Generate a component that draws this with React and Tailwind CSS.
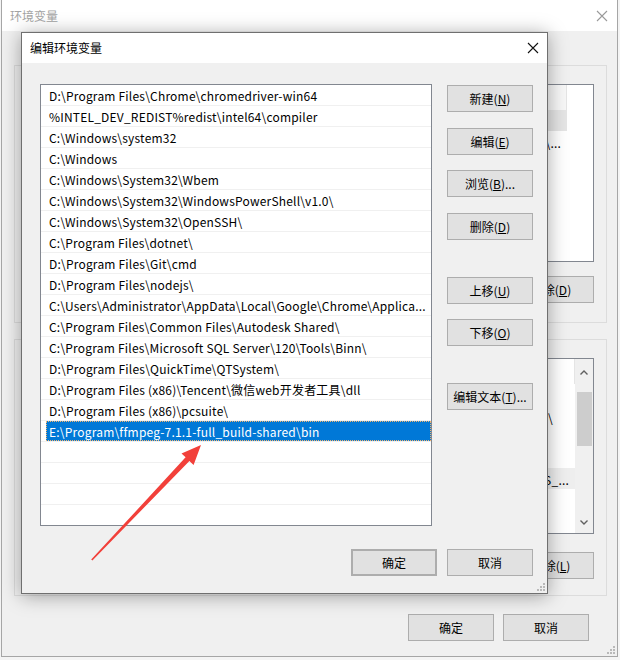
import React from 'react';

const paths = [
  'D:\\Program Files\\Chrome\\chromedriver-win64',
  '%INTEL_DEV_REDIST%redist\\intel64\\compiler',
  'C:\\Windows\\system32',
  'C:\\Windows',
  'C:\\Windows\\System32\\Wbem',
  'C:\\Windows\\System32\\WindowsPowerShell\\v1.0\\',
  'C:\\Windows\\System32\\OpenSSH\\',
  'C:\\Program Files\\dotnet\\',
  'D:\\Program Files\\Git\\cmd',
  'D:\\Program Files\\nodejs\\',
  'C:\\Users\\Administrator\\AppData\\Local\\Google\\Chrome\\Applica...',
  'C:\\Program Files\\Common Files\\Autodesk Shared\\',
  'C:\\Program Files\\Microsoft SQL Server\\120\\Tools\\Binn\\',
  'D:\\Program Files\\QuickTime\\QTSystem\\',
  'D:\\Program Files (x86)\\Tencent\\微信web开发者工具\\dll',
  'D:\\Program Files (x86)\\pcsuite\\',
  'E:\\Program\\ffmpeg-7.1.1-full_build-shared\\bin',
  '', '', '', '', '',
];

function CloseIcon({ color }) {
  return (
    <svg width="12" height="12" viewBox="0 0 12 12">
      <path d="M1 1L11 11M11 1L1 11" stroke={color} strokeWidth="1.1" fill="none" />
    </svg>
  );
}

function Grip() {
  return (
    <svg width="8" height="8" viewBox="0 0 8 8">
      <rect x="6" y="0" width="2" height="2" fill="#b9b9b9" />
      <rect x="3" y="3" width="2" height="2" fill="#b9b9b9" />
      <rect x="6" y="3" width="2" height="2" fill="#b9b9b9" />
      <rect x="0" y="6" width="2" height="2" fill="#b9b9b9" />
      <rect x="3" y="6" width="2" height="2" fill="#b9b9b9" />
      <rect x="6" y="6" width="2" height="2" fill="#b9b9b9" />
    </svg>
  );
}

function Btn({ children, className = '' }) {
  return (
    <div className={'w-[86px] h-[27px] shrink-0 bg-[#e1e1e1] border border-[#adadad] flex items-center justify-center text-[12px] text-black ' + className}>
      <span>{children}</span>
    </div>
  );
}

function Row({ text, selected }) {
  return (
    <div className="h-[21px] shrink-0 border-b border-[#f0f0f0] pl-[5px] flex">
      {selected ? (
        <div className="flex-1 bg-[#0078d7] text-white border border-dotted border-[#f3b46f] flex items-center pl-[2px] pt-[2px]">
          {text}
        </div>
      ) : (
        <div className="flex-1 flex items-center pl-[3px] pt-[2px] text-black">{text}</div>
      )}
    </div>
  );
}

function OuterWindow() {
  return (
    <div className="absolute left-[1px] top-0 w-[617px] h-[657px] border-x border-b border-[#a6a6a6] bg-[#f0f0f0] flex flex-col">
      <div className="h-[31px] shrink-0 bg-white flex items-center justify-between pl-[8px] pr-[9px]">
        <span className="text-[12px] text-[#a3a3a3]">环境变量</span>
        <CloseIcon color="#9a9a9a" />
      </div>

      <div className="mt-[34px] ml-[12px] mr-[10px] h-[258px] shrink-0 border border-[#dcdcdc] flex flex-col items-end pt-[18px] pr-[12px]">
        <div className="w-[560px] h-[178px] bg-white border border-[#828790] flex flex-col text-[12px] tracking-[0.2px] overflow-hidden">
          <div className="h-[25px] shrink-0 flex">
            <div className="w-[532px] border-r border-[#e5e5e5] bg-[#f7f7f7]" />
          </div>
          <div className="h-[21px] shrink-0 w-[532px] bg-[#e5e5e5]" />
          <div className="h-[21px] shrink-0 w-[532px] flex items-center justify-end pr-[6px] pt-[2px] text-black">
            C:\Users\Administrator\AppData\Local\Microsoft\WindowsApps\...
          </div>
        </div>
        <div className="mt-[14px]">
          <Btn>删除(<u>D</u>)</Btn>
        </div>
      </div>

      <div className="mt-[16px] ml-[12px] mr-[10px] h-[257px] shrink-0 border border-[#dcdcdc] flex flex-col items-end pt-[18px] pr-[12px]">
        <div className="w-[560px] h-[176px] bg-white border border-[#828790] flex text-[12px] tracking-[0.2px] overflow-hidden">
          <div className="flex-1 flex flex-col">
            <div className="h-[25px] shrink-0 border-r border-[#e5e5e5]" />
            <div className="h-[21px] shrink-0" />
            <div className="h-[21px] shrink-0 flex items-center justify-end pr-[22px] pt-[5px] text-black">C:\Windows\system32\</div>
            <div className="h-[21px] shrink-0" />
            <div className="h-[21px] shrink-0" />
            <div className="h-[21px] shrink-0 bg-[#eeeeee] flex items-center justify-end pr-[6px] pt-[2px] text-black">
              NUMBER_OF_PROCESSORS_...
            </div>
          </div>
          <div className="w-[18px] shrink-0 bg-[#f0f0f0] flex flex-col items-center">
            <svg width="10" height="17" viewBox="0 0 10 17" className="mt-[5px]">
              <path d="M1.5 10.5L5 7L8.5 10.5" stroke="#606060" strokeWidth="1.4" fill="none" />
            </svg>
            <div className="mt-[11px] w-[15px] h-[54px] bg-[#cdcdcd]" />
            <div className="flex-1" />
            <svg width="10" height="17" viewBox="0 0 10 17" className="mb-[2px]">
              <path d="M1.5 6.5L5 10L8.5 6.5" stroke="#606060" strokeWidth="1.4" fill="none" />
            </svg>
          </div>
        </div>
        <div className="mt-[18px]">
          <Btn>删除(<u>L</u>)</Btn>
        </div>
      </div>

      <div className="mt-[18px] flex justify-end gap-[9px] pr-[28px]">
        <Btn>确定</Btn>
        <Btn>取消</Btn>
      </div>
      <div className="flex-1 flex items-end justify-end pr-[2px] pb-[2px]">
        <Grip />
      </div>
    </div>
  );
}

function EditDialog() {
  return (
    <div className="absolute left-[21px] top-[32px] w-[527px] h-[562px] border border-[#6f6f6f] bg-[#f0f0f0] shadow-[0_2px_18px_rgba(0,0,0,0.35)] flex flex-col">
      <div className="h-[30px] shrink-0 bg-white flex items-center justify-between pl-[8px] pr-[8px]">
        <span className="text-[12px] text-black">编辑环境变量</span>
        <CloseIcon color="#111111" />
      </div>

      <div className="flex pl-[18px] pt-[21px]">
        <div className="w-[392px] h-[442px] bg-white border border-[#828790] flex flex-col overflow-hidden text-[12px] tracking-[0.2px]">
          {paths.map((p, i) => (
            <Row key={i} text={p} selected={i === 16} />
          ))}
        </div>

        <div className="ml-[15px] flex flex-col">
          <Btn className="mt-[1px]">新建(<u>N</u>)</Btn>
          <Btn className="mt-[16px]">编辑(<u>E</u>)</Btn>
          <Btn className="mt-[15px]">浏览(<u>B</u>)...</Btn>
          <Btn className="mt-[16px]">删除(<u>D</u>)</Btn>
          <Btn className="mt-[37px]">上移(<u>U</u>)</Btn>
          <Btn className="mt-[15px]">下移(<u>O</u>)</Btn>
          <Btn className="mt-[37px]">编辑文本(<u>T</u>)...</Btn>
        </div>
      </div>

      <div className="mt-[23px] flex justify-end gap-[10px] pr-[14px]">
        <Btn className="border-2 border-[#0078d7]">确定</Btn>
        <Btn>取消</Btn>
      </div>
      <div className="flex-1 flex items-end justify-end pr-[2px] pb-[2px]">
        <Grip />
      </div>
    </div>
  );
}

function Arrow() {
  return (
    <svg className="absolute left-0 top-0 pointer-events-none" width="620" height="660" viewBox="0 0 620 660">
      <polygon
        points="201,445 181.5,453.5 185.6,457.3 91.2,559.6 92.4,560.6 189.4,461 193.6,465"
        fill="#f2403a"
      />
    </svg>
  );
}

export default function App() {
  return (
    <div className="relative w-[620px] h-[660px] overflow-hidden bg-[#f4f4f4] font-['Noto_Sans_CJK_SC','Noto_Sans',sans-serif]">
      <OuterWindow />
      <EditDialog />
      <Arrow />
    </div>
  );
}
